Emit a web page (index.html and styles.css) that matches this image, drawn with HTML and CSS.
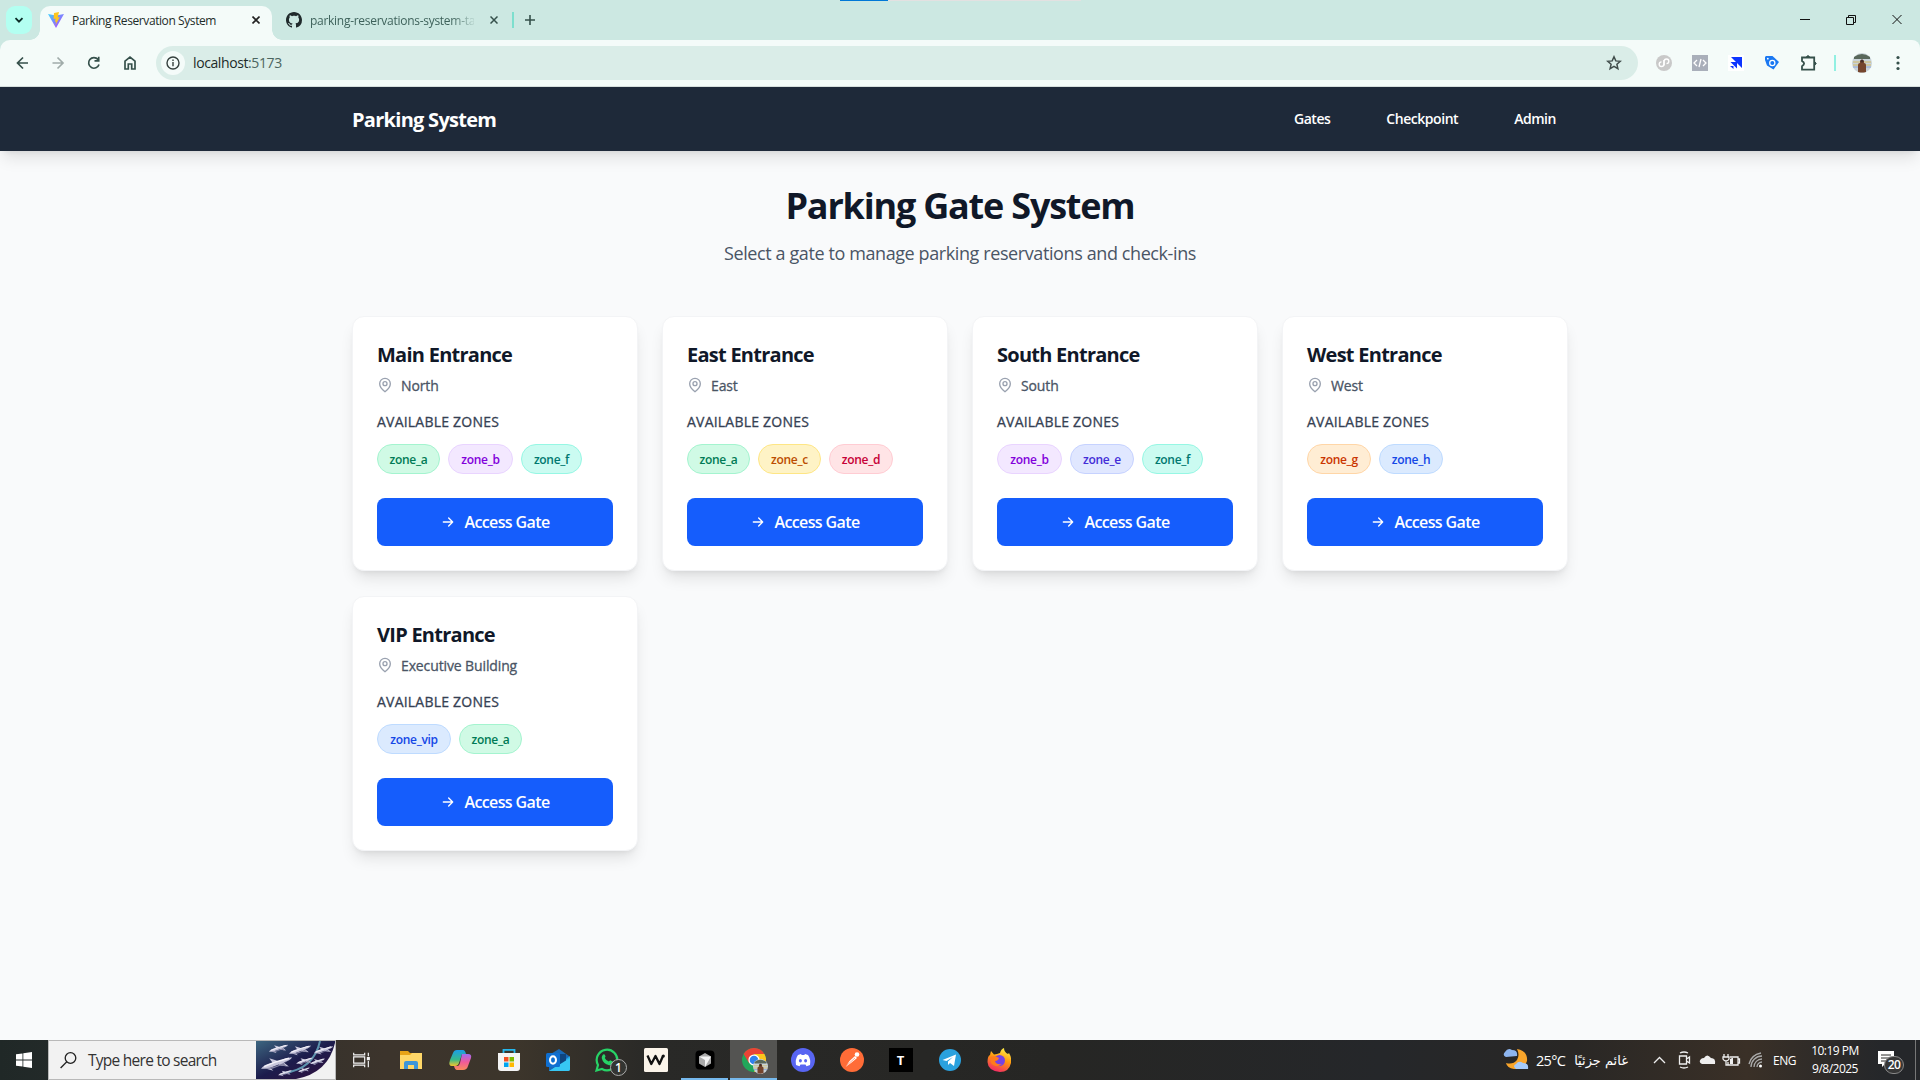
FILE: index.html
```html
<!DOCTYPE html>
<html lang="en">
<head>
<meta charset="utf-8">
<title>Parking Reservation System</title>
<link rel="stylesheet" href="styles.css">
</head>
<body>
<svg width="0" height="0" class="defs">
  <defs>
    <symbol id="pin" viewBox="0 0 24 24"><path d="M20 10c0 6-8 12-8 12s-8-6-8-12a8 8 0 0 1 16 0Z"/><circle cx="12" cy="10" r="3"/></symbol>
    <symbol id="arrow" viewBox="0 0 24 24"><path d="M5 12h14M13 6l6 6-6 6"/></symbol>
    <linearGradient id="vite" x1="0" y1="0" x2="1" y2="1"><stop offset="0" stop-color="#41d1ff"/><stop offset="1" stop-color="#bd34fe"/></linearGradient>
    <linearGradient id="cop1" x1="0" y1="0" x2="0" y2="1"><stop offset="0" stop-color="#1b9de8"/><stop offset=".6" stop-color="#37b98a"/><stop offset="1" stop-color="#f5c52c"/></linearGradient>
    <linearGradient id="cop2" x1="0" y1="0" x2="0" y2="1"><stop offset="0" stop-color="#a16cf0"/><stop offset=".5" stop-color="#f05a9a"/><stop offset="1" stop-color="#f98b5c"/></linearGradient>
    <linearGradient id="fox" x1="0.700" y1="0" x2=".3" y2="1"><stop offset="0" stop-color="#fff04a"/><stop offset=".45" stop-color="#ff980e"/><stop offset="1" stop-color="#f2236b"/></linearGradient>
    <linearGradient id="sky" x1="0" y1="0" x2="1" y2="1"><stop offset="0" stop-color="#3d6680"/><stop offset=".5" stop-color="#1c1c4c"/><stop offset="1" stop-color="#33103d"/></linearGradient>
    <symbol id="ship" viewBox="0 0 30 16"><path d="M0 13Q3 9 11 7L8 3l7 2 1 1 8-3 6-1q-1 3-8 5l5 4-8-1-2-1-8 3 3 3-7-2Z" fill="#c8c7dc"/><path d="M2 13q14-1 26-9l-6 4 3 3-6-1-8 3Z" fill="#8382a2"/><path d="M3 11Q14 6 27 3" stroke="#f4f3fa" stroke-width="1.500" fill="none"/></symbol>
    <symbol id="face" viewBox="0 0 20 20"><circle cx="10" cy="10" r="10" fill="#c9d3d9"/><path d="M2 4q8-6 16 0v2H2Z" fill="#59685b"/><path d="M1 9h18M1 12h18" stroke="#d3ba67"/><path d="M1 14h18" stroke="#8fa6d8"/><path d="M6 19v-7q0-2 2-2V8q2-3 4 0v2q2 0 2 2v7q-4 1-8 0Z" fill="#75452d"/><circle cx="10" cy="8" r="1.600" fill="#452e28"/></symbol>
  </defs>
</svg>

<div class="screen">
  <header class="browser">
    <div class="tabstrip">
      <div class="tab-search"><svg width="10" height="10" viewBox="0 0 10 10"><path d="M1.500 3.200 5 6.700l3.500-3.500" fill="none" stroke="#0b2b26" stroke-width="1.800"/></svg></div>
      <div class="tab active">
        <svg width="16" height="16" viewBox="0 0 16 16"><path d="M0 2l8 14L16 2 8 3.500Z" fill="url(#vite)"/><path d="M11 0 6 1l-.4 6 2-.4L7 10l1.300-.4-1 4L11.800 5 9.700 5.400Z" fill="#ffc61f"/></svg>
        <span class="tab-title">Parking Reservation System</span>
        <svg class="close" width="8" height="8" viewBox="0 0 8 8"><path d="M.5.5l7 7M7.500.5l-7 7" stroke="#222" stroke-width="1.600"/></svg>
      </div>
      <div class="tab">
        <svg width="16" height="16" viewBox="0 0 16 16"><path fill="#202a2c" d="M8 0C3.580 0 0 3.580 0 8c0 3.540 2.290 6.530 5.470 7.590.4.070.55-.17.55-.38 0-.19-.01-.82-.01-1.490-2.010.37-2.530-.49-2.690-.94-.09-.23-.48-.94-.82-1.130-.28-.15-.68-.52-.01-.53.63-.01 1.080.58 1.230.82.72 1.210 1.870.87 2.330.66.07-.52.28-.87.51-1.070-1.780-.2-3.640-.89-3.640-3.950 0-.87.31-1.590.82-2.150-.08-.2-.36-1.020.08-2.120 0 0 .67-.21 2.200.82.64-.18 1.320-.27 2-.27s1.360.09 2 .27c1.530-1.040 2.200-.82 2.200-.82.44 1.100.16 1.920.08 2.120.51.56.82 1.270.82 2.150 0 3.070-1.870 3.750-3.650 3.950.29.25.54.73.54 1.480 0 1.070-.01 1.930-.01 2.200 0 .21.15.46.55.38A8.010 8.010 0 0 0 16 8c0-4.420-3.580-8-8-8Z"/></svg>
        <span class="tab-title second">parking-reservations-system-ta</span>
        <svg class="close" width="8" height="8" viewBox="0 0 8 8"><path d="M.5.5l7 7M7.500.5l-7 7" stroke="#35504b" stroke-width="1.500"/></svg>
      </div>
      <i class="tab-sep"></i>
      <svg class="plus" width="10" height="10" viewBox="0 0 10 10"><path d="M5 0v10M0 5h10" stroke="#35504b" stroke-width="1.600"/></svg>
      <div class="loading"><i></i></div>
      <svg class="winctl" width="102" height="12" viewBox="0 0 102 12" fill="none" stroke="#111"><path d="M0 5.500h10"/><path d="M46.500 3.500h7v7h-7zM48.500 3.500v-2h7v7h-2"/><path d="M92.500 1l9 9M101.500 1l-9 9"/></svg>
    </div>
    <div class="toolbar">
      <svg class="navicons" width="122" height="16" viewBox="0 0 122 16" fill="none" stroke="#35504b" stroke-width="1.700">
        <path d="M12 8H1.500M7 2.500 1.500 8l5.500 5.500"/>
        <path d="M36.500 8H47M41.500 2.500 47 8l-5.500 5.500" stroke="#a0acaa"/>
        <path d="M82 4.500A5.300 5.300 0 1 0 83 9.500M82.700 1.800v4h-4.200"/>
        <path d="M109 14V6.200L114 2l5 4.200V14h-3.300V9h-3.400v5Z"/>
      </svg>
      <div class="omnibox">
        <span class="info"><svg width="14" height="14" viewBox="0 0 14 14" fill="none" stroke="#35403e" stroke-width="1.400"><circle cx="7" cy="7" r="6"/><path d="M7 6v4.300M7 3.400v1.500"/></svg></span>
        <span class="url">localhost<em>:5173</em></span>
        <svg class="star" width="16" height="16" viewBox="0 0 16 16" fill="none" stroke="#414d4b" stroke-width="1.500"><path d="M8 1.800l1.800 4.100 4.500.4-3.400 3 1 4.400L8 11.400l-3.900 2.300 1-4.400-3.400-3 4.500-.4Z"/></svg>
      </div>
      <div class="exts">
        <svg width="16" height="16" viewBox="0 0 16 16"><circle cx="8" cy="8" r="8" fill="#c9c9c9"/><path d="M7.800 5v4.200a2.300 2.300 0 1 1-2.300-2.300M8.200 10.500V6.300a2.300 2.300 0 1 1 2.300 2.300" fill="none" stroke="#fff" stroke-width="1.400"/></svg>
        <svg width="16" height="16" viewBox="0 0 16 16"><path d="M0 0h16v16H0Z" fill="#a9afba"/><path d="M5 5 2 8l3 3M11 5l3 3-3 3M9 4 7 12" fill="none" stroke="#fff" stroke-width="1.300"/></svg>
        <svg width="16" height="16" viewBox="0 0 16 16"><path d="M0 0h16v16H0Z" fill="#fff"/><path d="M3 2h11v11ZM2.500 7h6.500v6.500ZM2 11h3.500v3Z" fill="#0c35ff"/></svg>
        <svg width="16" height="16" viewBox="0 0 16 16"><path d="M1 2l1-1h6.500l6.500 6-5.500 7.500L3 10.500 1 5Z" fill="#1a78f2"/><circle cx="8.300" cy="8" r="2.600" fill="none" stroke="#fff" stroke-width="1.200"/><circle cx="3.800" cy="3.700" r=".9" fill="#fff"/></svg>
        <svg width="18" height="18" viewBox="0 0 18 18" fill="none" stroke="#35504b" stroke-width="1.800"><path d="M2 3.500h12.200v12.200H2v-3.500q4.200-2.600 0-5.200Z"/><path d="M6.300 3q1.700-3 3.400 0ZM14.700 7.800q3 1.700 0 3.400Z" fill="#35504b" stroke-width="1"/></svg>
      </div>
      <i class="ext-sep"></i>
      <svg class="avatar" width="20" height="20"><use href="#face"/></svg>
      <svg class="dots" width="4" height="16" viewBox="0 0 4 16" fill="#35504b"><circle cx="2" cy="2.500" r="1.600"/><circle cx="2" cy="8" r="1.600"/><circle cx="2" cy="13.500" r="1.600"/></svg>
    </div>
  </header>

  <nav class="navbar">
    <div class="container nav-inner">
      <a class="brand">Parking System</a>
      <div class="links"><a>Gates</a><a>Checkpoint</a><a>Admin</a></div>
    </div>
  </nav>

  <main class="page">
    <div class="container">
      <div class="hero"><h1>Parking Gate System</h1><p>Select a gate to manage parking reservations and check-ins</p></div>
      <div class="grid">
        <article class="card">
          <h3>Main Entrance</h3>
          <div class="loc"><svg><use href="#pin"/></svg><span>North</span></div>
          <h4>AVAILABLE ZONES</h4>
          <div class="zones"><span class="zone green">zone_a</span><span class="zone purple">zone_b</span><span class="zone teal">zone_f</span></div>
          <button><svg><use href="#arrow"/></svg><span>Access Gate</span></button>
        </article>
        <article class="card">
          <h3>East Entrance</h3>
          <div class="loc"><svg><use href="#pin"/></svg><span>East</span></div>
          <h4>AVAILABLE ZONES</h4>
          <div class="zones"><span class="zone green">zone_a</span><span class="zone amber">zone_c</span><span class="zone rose">zone_d</span></div>
          <button><svg><use href="#arrow"/></svg><span>Access Gate</span></button>
        </article>
        <article class="card">
          <h3>South Entrance</h3>
          <div class="loc"><svg><use href="#pin"/></svg><span>South</span></div>
          <h4>AVAILABLE ZONES</h4>
          <div class="zones"><span class="zone purple">zone_b</span><span class="zone indigo">zone_e</span><span class="zone teal">zone_f</span></div>
          <button><svg><use href="#arrow"/></svg><span>Access Gate</span></button>
        </article>
        <article class="card">
          <h3>West Entrance</h3>
          <div class="loc"><svg><use href="#pin"/></svg><span>West</span></div>
          <h4>AVAILABLE ZONES</h4>
          <div class="zones"><span class="zone orange">zone_g</span><span class="zone blue">zone_h</span></div>
          <button><svg><use href="#arrow"/></svg><span>Access Gate</span></button>
        </article>
        <article class="card">
          <h3>VIP Entrance</h3>
          <div class="loc"><svg><use href="#pin"/></svg><span>Executive Building</span></div>
          <h4>AVAILABLE ZONES</h4>
          <div class="zones"><span class="zone blue vip">zone_vip</span><span class="zone green">zone_a</span></div>
          <button><svg><use href="#arrow"/></svg><span>Access Gate</span></button>
        </article>
      </div>
    </div>
  </main>

  <footer class="taskbar">
    <div class="start"><svg width="16" height="16" viewBox="0 0 16 16" fill="#fff"><path d="M0 2.300 6.500 1.400v6.200H0ZM7.300 1.200 16 0v7.600H7.300ZM0 8.400h6.500v6.200L0 13.700ZM7.300 8.400H16V16l-8.700-1.200Z"/></svg></div>
    <div class="search">
      <svg width="17" height="17" viewBox="0 0 17 17" fill="none" stroke="#222" stroke-width="1.300"><circle cx="10.500" cy="6" r="5.300"/><path d="M6.800 9.800.6 16"/></svg>
      <span>Type here to search</span>
      <svg class="ships" width="79" height="38" viewBox="0 0 79 38"><path d="M0 0h79v2Q72 32 40 38H0Z" fill="url(#sky)"/><path d="M64 0Q58 28 28 32" fill="none" stroke="#5c93ad" stroke-width="2"/>
        <use href="#ship" x="5" y="14" width="31" height="17"/><use href="#ship" x="33" y="2" width="22" height="14"/><use href="#ship" x="58" y="3" width="19" height="12"/><use href="#ship" x="13" y="2" width="19" height="11"/><use href="#ship" x="40" y="15" width="17" height="10"/><use href="#ship" x="54" y="16" width="15" height="9"/><use href="#ship" x="42" y="25" width="12" height="8"/><use href="#ship" x="22" y="28" width="14" height="8"/></svg>
    </div>
    <div class="apps">
      <div class="app taskview"><svg viewBox="0 0 24 24" fill="none" stroke="#f2f2f2" stroke-width="1.300"><path d="M4 8.500h12v7H4ZM4 4v2.500h12V4M4 20v-2.500h12V20M20 4v4M20 13v7"/><path d="M19 9.500h2v2h-2Z" fill="#fff"/></svg></div>
      <div class="app"><svg viewBox="0 0 24 24"><path d="M1 3h8l2 2h12v16H1Z" fill="#e8a317"/><path d="M1 7h10l2-2h10v16H1Z" fill="#ffd768"/><path d="M5 21v-6q0-2 2-2h10q2 0 2 2v6h-4v-4H9v4Z" fill="#3e96d8"/></svg></div>
      <div class="app"><svg viewBox="0 0 24 24"><path d="M9 2h6q2 0 3 4h-4l-3 9q-1 3-4 3H4q-4 0-2-6L5 5Q6 2 9 2Z" fill="url(#cop1)"/><path d="M14 6h6q4 0 3 4l-3 8q-1 4-5 4H9q-2 0-3-4h4q1 0 2-3Z" fill="url(#cop2)"/></svg></div>
      <div class="app"><svg viewBox="0 0 24 24"><path d="M6.500 6V1.800h11V6" fill="none" stroke="#25b8ee" stroke-width="1.800"/><path d="M1 5h22v15q0 3-3 3H4q-3 0-3-3Z" fill="#f4f4f4"/><path d="M7 9h4.500v4.500H7Z" fill="#f25022"/><path d="M12.500 9H17v4.500h-4.500Z" fill="#7fba00"/><path d="M7 14.500h4.500V19H7Z" fill="#00a4ef"/><path d="M12.500 14.500H17V19h-4.500Z" fill="#ffb900"/></svg></div>
      <div class="app"><svg viewBox="0 0 24 24"><path d="M3 7 13 1l10 7v15H3Z" fill="#1769b8"/><path d="M24 8v13q0 2-2 2H4Z" fill="#27a9e8"/><path d="M8 6h12v8l-8 5Z" fill="#0e4580"/><path d="M3 23 24 10v11q0 2-2 2Z" fill="#37c7f3"/><rect y="5" width="14" height="14" rx="1.500" fill="#0f6fd1"/><ellipse cx="7" cy="12" rx="3" ry="3.700" fill="none" stroke="#fff" stroke-width="2"/></svg></div>
      <div class="app"><svg viewBox="0 0 24 24"><path d="M1.500 22.500 3 17A10.300 10.300 0 1 1 7 21Z" fill="#2b2b28" stroke="#27d366" stroke-width="2.200"/><path d="M8 6.500q2-1 2.500 2l-.7 1.500q1.200 2.700 4 3.500l1.400-1.300 3 1.500q-.7 4-4 3.500Q8 16 6.700 10q0-2 1.300-3.500Z" fill="#27d366"/></svg><b class="count">1</b></div>
      <div class="app"><svg viewBox="0 0 24 24"><rect width="24" height="24" rx="1.500" fill="#fbf4ea"/><path d="M3.500 7.500 7.300 16l4.200-8 4 8L19 8" fill="none" stroke="#111" stroke-width="2.300" stroke-linejoin="round"/><circle cx="19.300" cy="8" r="1.600" fill="#111"/></svg></div>
      <div class="app open"><svg viewBox="0 0 24 24"><rect x="2.500" y="2.500" width="19" height="19" rx="4" fill="#000"/><path d="M12 5l6 3.500v7L12 19l-6-3.500v-7Z" fill="#aaa"/><path d="M6 8.500h12L12 19v-7Z" fill="#f4f4f4"/></svg></div>
      <div class="app current"><svg viewBox="0 0 24 24"><circle cx="12" cy="12" r="12" fill="#22a65a"/><path d="M12 6h10.400A12 12 0 0 1 12 24l5-9Z" fill="#fbc51d"/><path d="M1.600 6A12 12 0 0 1 22.400 6H12L7 15Z" fill="#ea4335"/><circle cx="12" cy="12" r="5.600" fill="#fff"/><circle cx="12" cy="12" r="4.300" fill="#3181ed"/></svg><svg class="mini" viewBox="0 0 20 20"><use href="#face"/></svg></div>
      <div class="app"><svg viewBox="0 0 24 24"><circle cx="12" cy="12" r="12" fill="#5865f2"/><path d="M5 17Q4 11 7 7l3-1 .7 1h2.600l.7-1 3 1q3 4 2 10l-3.500 1.200-1-1.700h-5l-1 1.700Z" fill="#fff"/><ellipse cx="9.400" cy="12.700" rx="1.500" ry="1.700" fill="#5865f2"/><ellipse cx="14.600" cy="12.700" rx="1.500" ry="1.700" fill="#5865f2"/></svg></div>
      <div class="app"><svg viewBox="0 0 24 24"><circle cx="12" cy="12" r="12" fill="#ff6c37"/><circle cx="17" cy="6.500" r="2.300" fill="#fff"/><path d="M15 8l2 2-6 5-5.500 4 4-6Z" fill="#fff"/><path d="M5 19l10-9" stroke="#ff6c37" stroke-width=".6"/></svg></div>
      <div class="app"><b class="tee">T</b></div>
      <div class="app"><svg viewBox="0 0 24 24"><circle cx="12" cy="12" r="11" fill="#2aa1de"/><path d="M4.500 12 18 6.500 16 18l-4-3-2 2v-3.500l5-4.500-6.500 4Z" fill="#fff"/></svg></div>
      <div class="app"><svg viewBox="0 0 24 24"><path d="M4 3l3 3.500 3-.5 3-1q1-4 4-5 0 4 4 6l1-1q3 5 2 10-2 9-11 9Q1 23 .5 14 .5 8 3 7Z" fill="url(#fox)"/><circle cx="12.500" cy="12.500" r="5.500" fill="#7542e5"/><path d="M3 9q5-2 9 1-1 3-4 3 1 4 7 3-7 5-11-1Z" fill="#ff7b1c"/></svg></div>
    </div>
    <div class="tray">
      <svg class="weather" width="26" height="24" viewBox="0 0 26 24"><path d="M14 1q11 2 10 12-3 9-13 8-7-1-8-6 7 2 11-3 3-5 0-11Z" fill="#f9a52b"/><path d="M3 9q-4-2-1-5Q5-1 9 2q6 0 5 6Z" fill="#8db5ef"/><path d="M13 21q-4-3 0-5 3-4 7-1 6 0 5 6Z" fill="#a6caf9"/></svg>
      <span class="temp">25°C</span><span class="cond" dir="rtl">غائم جزئيًا</span>
      <svg class="trayicons" width="112" height="20" viewBox="0 0 112 20" fill="none" stroke="#eee" stroke-width="1.300"><path d="M1 13l5.500-5.500L12 13"/><path d="M26.500 6h7v8h-7ZM33.500 9l3-2v6l-3-2M27 3q4-2 8 0M27 17q4 2 8 0"/><path d="M49 14q-4-2-1-5 1-1 3-1 3-5 7 0 5 0 4 6Z" fill="#eee" stroke="none"/><path d="M77 7h8v8H75v-3M85 9h1.500v4H85M71 4v3M75 4v3M70 7h6v2q-1 2-3 2t-3-2ZM73 11v4h2"/><path d="M79 8h1v6h-3V9Z" fill="#eee" stroke="none"/><g stroke="#aaa"><path d="M98 17A11 11 0 0 1 109 6M101 17a8 8 0 0 1 8-8M104 17a5 5 0 0 1 5-5M96 14Q98 5 108 3"/></g><circle cx="107.500" cy="16" r="1.500" fill="#fff" stroke="none"/></svg>
      <span class="lang">ENG</span>
      <span class="clock">10:19 PM<br>9/8/2025</span>
      <div class="notes"><svg width="16" height="16" viewBox="0 0 16 16"><path d="M0 0h16v13H7l-3 3v-3H0Z" fill="#fff"/><path d="M3 4h10M3 7h10M3 10h6" stroke="#292827" stroke-width="1"/></svg><b>20</b></div>
      <i class="peek"></i>
    </div>
  </footer>
</div>
</body>
</html>
```
FILE: styles.css
```css
* { box-sizing: border-box; }
body { margin: 0; overflow: hidden; font-family: "Open Sans", "Noto Sans", sans-serif; }
svg { display: block; flex: none; }
h1, h3, h4, p { margin: 0; }
.defs { position: absolute; }
.screen { width: 1920px; height: 1080px; display: flex; flex-direction: column; background: #f9fafb; }

.browser { height: 87px; flex: none; background: #cce8e2; }
.tabstrip { height: 40px; display: flex; align-items: center; padding-left: 6px; position: relative; }
.tab-search { width: 26px; height: 28px; border-radius: 9px; background: #b3fff1; display: grid; place-items: center; margin-right: 8px; }
.tab { width: 240px; height: 34px; margin-top: 6px; display: flex; align-items: center; font-size: 12px; color: #3e625b; padding: 0 0 6px 14px; position: relative; }
.tab.active { width: 232px; background: #f4fbf9; border-radius: 10px 10px 0 0; color: #1d2c29; padding-left: 8px; }
.tab svg:first-child { margin-right: 8px; }
.tab.active::before, .tab.active::after { content: ""; position: absolute; bottom: 0; width: 10px; height: 10px; }
.tab.active::before { left: -10px; background: radial-gradient(circle at 0 0, transparent 9.500px, #f4fbf9 10px); }
.tab.active::after { right: -10px; background: radial-gradient(circle at 100% 0, transparent 9.500px, #f4fbf9 10px); }
.tab-title { white-space: nowrap; width: 164px; margin-right: 16px; letter-spacing: -.41px; }
.tab-title.second { letter-spacing: -.28px; -webkit-mask-image: linear-gradient(90deg, #000 86%, transparent 102%); mask-image: linear-gradient(90deg, #000 86%, transparent 102%); }
.tab-sep { width: 2px; height: 16px; background: #7ddfce; }
.plus { margin-left: 11px; }
.loading { width: 241px; height: 1px; background: #e3e1e1; position: absolute; left: 840px; top: 0; }
.loading i { display: block; width: 48px; height: 1px; background: #0078d7; }
.winctl { margin-left: auto; margin-right: 18px; }
.toolbar { height: 47px; background: #f4fbf9; border-bottom: 1px solid #d6dfdd; border-radius: 10px 8px 0 0; display: flex; align-items: center; padding: 0 0 1px 16px; }
.navicons { margin-right: 18px; }
.omnibox { width: 1482px; height: 34px; border-radius: 17px; background: #daede8; display: flex; align-items: center; padding-left: 5px; }
.info { width: 24px; height: 24px; border-radius: 50%; background: #f4fbf9; display: grid; place-items: center; }
.url { font-size: 14px; letter-spacing: -.4px; margin-left: 8px; color: #1c2b28; }
.url em { font-style: normal; color: #4c6560; }
.star { margin: 0 16px 0 auto; }
.exts { display: flex; align-items: center; gap: 20px; margin-left: 18px; }
.ext-sep { width: 2px; height: 16px; background: #91f0e2; margin-left: 16px; }
.avatar { margin-left: 16px; }
.dots { margin-left: 24px; }

.navbar { height: 64px; flex: none; background: #1e2939; box-shadow: 0 10px 15px -3px rgba(0,0,0,.1), 0 4px 6px -4px rgba(0,0,0,.1); position: relative; }
.container { width: 1216px; margin: 0 auto; }
.nav-inner { height: 64px; display: flex; align-items: center; justify-content: space-between; color: #fff; }
.brand { font-size: 20px; font-weight: 700; letter-spacing: -.72px; }
.links { display: flex; gap: 32px; font-size: 14px; font-weight: 600; padding-bottom: 1px; }
.links a { padding: 8px 12px; letter-spacing: -.46px; }
.page { flex: 1; padding-top: 32px; }
.hero { text-align: center; height: 133px; padding-top: 1px; }
.hero h1 { font-size: 36px; line-height: 44px; font-weight: 700; letter-spacing: -1.200px; color: #101828; }
.hero p { font-size: 18px; line-height: 28px; letter-spacing: -.4px; color: #4a5565; margin-top: 11px; }
.grid { display: grid; grid-template-columns: repeat(4, 286px); gap: 25px 24px; }
.card { height: 255px; border: 1px solid #f3f4f6; border-radius: 12px; background: #fff; padding: 24px; box-shadow: 0 10px 15px -3px rgba(0,0,0,.1), 0 4px 6px -4px rgba(0,0,0,.1); }
.card h3 { font-size: 20px; line-height: 28px; font-weight: 700; letter-spacing: -.74px; color: #101828; }
.loc { display: flex; align-items: center; height: 20px; margin-top: 6px; font-size: 14px; color: #4a5565; letter-spacing: -.12px; -webkit-text-stroke: .3px #4a5565; }
.loc svg { width: 16px; height: 16px; fill: none; stroke: #99a1af; stroke-width: 2; margin-right: 8px; }
.card h4 { font-size: 14px; line-height: 20px; font-weight: 400; letter-spacing: .22px; color: #364153; margin: 17px 0 12px; -webkit-text-stroke: .3px #364153; }
.zones { display: flex; gap: 8px; margin-bottom: 24px; }
.zone { height: 30px; width: 63px; border: 1px solid; border-radius: 15px; display: flex; align-items: center; justify-content: center; font-size: 12px; font-weight: 600; letter-spacing: -.3px; padding-top: 1px; }
.green { background: #d0fae5; border-color: #a4f4cf; color: #007a55; }
.purple { background: #f3e8ff; border-color: #e9d4ff; color: #8200db; width: 65px; }
.teal { background: #cbfbf1; border-color: #96f7e4; color: #00786f; width: 61px; }
.amber { background: #fef3c6; border-color: #fee685; color: #bb4d00; }
.rose { background: #ffe4e6; border-color: #ffccd3; color: #c70036; width: 64px; }
.indigo { background: #e0e7ff; border-color: #c6d2ff; color: #432dd7; width: 64px; }
.orange { background: #ffedd4; border-color: #ffd6a7; color: #ca3500; width: 64px; }
.blue { background: #dbeafe; border-color: #bedbff; color: #1447e6; width: 64px; }
.vip { width: 74px; }
.card button { width: 100%; height: 48px; border: 0; border-radius: 8px; background: #155dfc; color: #fff; font: 600 16px "Open Sans", sans-serif; letter-spacing: -.62px; display: flex; align-items: center; justify-content: center; gap: 8px; padding: 0; }
.card button svg { width: 16px; height: 16px; fill: none; stroke: #fff; stroke-width: 2; stroke-linecap: round; stroke-linejoin: round; }

.taskbar { height: 40px; flex: none; display: flex; background: linear-gradient(90deg, #202827 0, #232a29 3%, #3c342c 20%, #3c352b 27%, #292927 34%, #262624 55%, #25272a 72%, #292725 82%, #3a3027 91%, #25272a 98%); color: #fff; }
.start { width: 48px; display: grid; place-items: center; }
.search { width: 288px; background: #f2f2f2; border: 1px solid #b9b9b9; display: flex; align-items: center; padding-left: 11px; color: #333; font-size: 15.500px; letter-spacing: -.74px; }
.search span { margin-left: 11px; white-space: nowrap; }
.ships { margin-left: auto; }
.apps { display: flex; padding-left: 1px; }
.app { width: 47px; margin-right: 2px; height: 40px; display: grid; place-items: center; position: relative; }
.app > svg { width: 24px; height: 24px; }
.app.taskview { margin-right: 3px; }
.app.taskview svg { width: 22px; height: 22px; }
.count { position: absolute; right: 3px; bottom: 4px; width: 17px; height: 17px; border: 1px solid #aaa; border-radius: 50%; background: #343532; font-size: 12px; line-height: 15px; text-align: center; font-weight: 600; }
.open { border-bottom: 2px solid #76b9ed; padding-top: 2px; }
.current { background: #545452; border-bottom: 2px solid #76b9ed; padding-top: 2px; }
.app > .mini { position: absolute; width: 15px; height: 15px; left: 23px; top: 19px; }
.tee { width: 24px; height: 24px; background: #000; font-size: 13px; line-height: 24px; text-align: center; }
.tray { margin-left: auto; display: flex; align-items: center; font-size: 13px; }
.temp { margin-left: 7px; font-size: 14.500px; letter-spacing: -.7px; width: 31px; white-space: nowrap; }
.cond { margin-left: 7px; width: 54px; font-size: 13px; font-family: "DejaVu Sans", sans-serif; white-space: nowrap; letter-spacing: 0; }
.trayicons { margin-left: 25px; }
.lang { margin-left: 8px; width: 26px; font-size: 12px; letter-spacing: -.5px; }
.clock { margin-left: 11px; width: 50px; text-align: center; font-size: 12px; line-height: 18px; letter-spacing: -.5px; white-space: nowrap; }
.notes { margin-left: 18px; width: 31px; height: 26px; position: relative; padding-top: 4px; }
.notes b { position: absolute; left: 6px; top: 9px; width: 20px; height: 18px; border: 1px solid #888; border-radius: 9px; background: #363636; font-size: 12px; line-height: 15px; text-align: center; font-weight: 600; letter-spacing: -.5px; }
.peek { width: 1px; height: 40px; background: #777; margin-left: 6px; margin-right: 4px; }
```
